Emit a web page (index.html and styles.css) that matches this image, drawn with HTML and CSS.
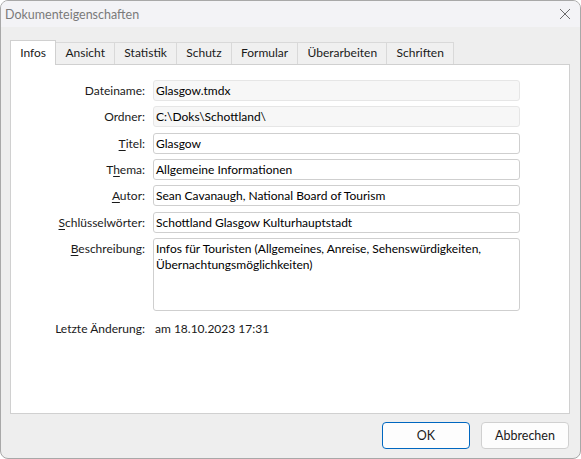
FILE: index.html
```html
<!DOCTYPE html>
<html lang="de">
<head>
<meta charset="utf-8">
<title>Dokumenteigenschaften</title>
<link rel="stylesheet" href="styles.css">
</head>
<body>
<div class="window">
  <div class="titlebar">
    <span class="title">Dokumenteigenschaften</span>
    <svg class="close" width="12" height="12" viewBox="0 0 12 12"><path d="M1 1 L11 11 M11 1 L1 11" stroke="#6b6b6b" stroke-width="1" fill="none"/></svg>
  </div>
  <div class="tabs">
    <div class="tab active">Infos</div>
    <div class="tab">Ansicht</div>
    <div class="tab">Statistik</div>
    <div class="tab">Schutz</div>
    <div class="tab">Formular</div>
    <div class="tab">Überarbeiten</div>
    <div class="tab">Schriften</div>
  </div>
  <div class="panel">
    <div class="form">
      <label class="lbl">Dateiname:</label>
      <div class="field readonly">Glasgow.tmdx</div>
      <label class="lbl">Ordner:</label>
      <div class="field readonly">C:\Doks\Schottland\</div>
      <label class="lbl"><u>T</u>itel:</label>
      <div class="field">Glasgow</div>
      <label class="lbl">T<u>h</u>ema:</label>
      <div class="field">Allgemeine Informationen</div>
      <label class="lbl"><u>A</u>utor:</label>
      <div class="field">Sean Cavanaugh, National Board of Tourism</div>
      <label class="lbl"><u>S</u>chlüsselwörter:</label>
      <div class="field">Schottland Glasgow Kulturhauptstadt</div>
      <label class="lbl lbl-top"><u>B</u>eschreibung:</label>
      <div class="field area">Infos für Touristen (Allgemeines, Anreise, Sehenswürdigkeiten, Übernachtungsmöglichkeiten)</div>
      <label class="lbl lbl-last">Letzte Änderung:</label>
      <div class="value lbl-last">am 18.10.2023 17:31</div>
    </div>
  </div>
  <div class="footer">
    <button class="btn default">OK</button>
    <button class="btn">Abbrechen</button>
  </div>
</div>
</body>
</html>
```
FILE: styles.css
```css
* { box-sizing: border-box; }
html, body { margin: 0; padding: 0; background: #ffffff; }
body {
  font-family: "Lato", "Noto Sans", sans-serif;
  font-size: 12px;
  color: #1a1a1a;
}
.window {
  width: 581px;
  height: 459px;
  border: 1px solid #a8a8a8;
  border-radius: 8px;
  background: #eeeeee;
  overflow: hidden;
  display: flex;
  flex-direction: column;
}
.titlebar {
  height: 26px;
  flex: none;
  background: #f3f3f6;
  display: flex;
  align-items: center;
  justify-content: space-between;
  padding: 0 9px 0 4px;
}
.title {
  color: #7a7a7a;
  font-size: 12.5px;
}
.close { display: block; }
.tabs {
  display: flex;
  align-items: flex-end;
  height: 37px;
  padding-left: 9px;
  flex: none;
}
.tab {
  height: 22px;
  line-height: 20px;
  padding: 0 9.2px;
  background: #f0f0f0;
  border: 1px solid #d9d9d9;
  border-bottom: none;
  margin-left: -1px;
  color: #1a1a1a;
}
.tab:first-child { margin-left: 0; }
.tab.active {
  line-height: 23px;
  background: #ffffff;
  border-color: #d0d0d0;
  position: relative;
  z-index: 1;
  margin-bottom: -1px;
  height: 25px;
}
.panel {
  width: 560px;
  height: 350px;
  margin-left: 9px;
  background: #ffffff;
  border: 1px solid #d0d0d0;
  flex: none;
  padding-top: 15px;
}
.form {
  display: grid;
  grid-template-columns: 134px 367px;
  column-gap: 8px;
  row-gap: 5.35px;
}
.lbl {
  text-align: right;
  line-height: 21px;
  color: #1a1a1a;
}
.lbl u { text-decoration-thickness: 1px; text-underline-offset: 2px; }
.lbl-last { margin-top: 2px; }
.field {
  height: 21px;
  line-height: 19px;
  border: 1px solid #cfcfcf;
  border-radius: 3px;
  background: #ffffff;
  padding: 0 2px;
  white-space: nowrap;
  color: #000000;
}
.field.readonly {
  background: #f7f7f7;
  border-color: #e6e6e6;
}
.field.area {
  height: 73px;
  white-space: normal;
  line-height: 16px;
  padding-top: 2px;
}
.value {
  line-height: 21px;
  padding-left: 2px;
  color: #1a1a1a;
}
.footer {
  display: flex;
  justify-content: flex-end;
  gap: 11px;
  padding: 8px 11px 0 0;
}
.btn {
  width: 88px;
  height: 27px;
  font-family: inherit;
  font-size: 12.5px;
  color: #1a1a1a;
  background: #fdfdfd;
  border: 1px solid #d0d0d0;
  border-radius: 4px;
  padding: 0;
}
.btn.default {
  border-color: #0067c0;
}
```
